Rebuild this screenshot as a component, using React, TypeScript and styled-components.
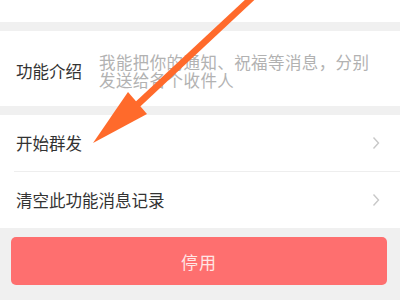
import styled, { createGlobalStyle } from "styled-components";

const GlobalStyle = createGlobalStyle`
  html, body {
    margin: 0;
    padding: 0;
    background: #f0f0f0;
  }
  body {
    font-family: "Noto Sans CJK SC", "Noto Sans", sans-serif;
  }
`;

const Page = styled.div`
  position: relative;
  width: 400px;
  height: 300px;
  overflow: hidden;
  background: #f0f0f0;
  display: flex;
  flex-direction: column;
  gap: 9px;
`;

const Section = styled.div<{ $height?: number }>`
  background: #ffffff;
  ${(p) => (p.$height ? `height: ${p.$height}px;` : "")}
`;

const IntroRow = styled.div`
  display: flex;
  align-items: center;
  height: 75px;
  padding: 5px 16px 0 16px;
  box-sizing: border-box;
`;

const Label = styled.div`
  width: 83px;
  flex: none;
  font-size: 16.5px;
  color: #333333;
`;

const Description = styled.div`
  flex: 1;
  font-size: 16.5px;
  line-height: 18px;
  color: #b2b2b2;
  letter-spacing: 0.4px;
`;

const NavRow = styled.div<{ $divider?: boolean }>`
  display: flex;
  align-items: center;
  justify-content: space-between;
  height: 56px;
  margin-left: 14px;
  padding: 0 20px 0 2px;
  ${(p) => (p.$divider ? "border-bottom: 1px solid #eeeeee;" : "")}
`;

const NavText = styled.span`
  font-size: 16.5px;
  color: #333333;
`;

const Chevron = styled.svg`
  width: 8px;
  height: 14px;
  flex: none;
`;

const ButtonArea = styled.div`
  padding: 0 13px 0 11px;
`;

const StopButton = styled.button`
  width: 100%;
  height: 48px;
  border: none;
  border-radius: 5px;
  background: #fe6f6f;
  color: #ffe6e6;
  font-family: "Noto Sans CJK SC", sans-serif;
  font-size: 17px;
  letter-spacing: 1px;
`;

const ArrowOverlay = styled.svg`
  position: absolute;
  left: 0;
  top: 0;
  pointer-events: none;
`;

const ChevronIcon = () => (
  <Chevron viewBox="0 0 8 14">
    <path d="M1.5 1.5 L6.5 7 L1.5 12.5" fill="none" stroke="#c8c8c8" strokeWidth="1.4" />
  </Chevron>
);

export default function App() {
  return (
    <>
      <GlobalStyle />
      <Page>
        <Section $height={22} />
        <Section>
          <IntroRow>
            <Label>功能介绍</Label>
            <Description>我能把你的通知、祝福等消息，分别发送给各个收件人</Description>
          </IntroRow>
        </Section>
        <Section>
          <NavRow $divider>
            <NavText>开始群发</NavText>
            <ChevronIcon />
          </NavRow>
          <NavRow>
            <NavText>清空此功能消息记录</NavText>
            <ChevronIcon />
          </NavRow>
        </Section>
        <ButtonArea>
          <StopButton>停用</StopButton>
        </ButtonArea>
        <ArrowOverlay width="400" height="300" viewBox="0 0 400 300">
          <line x1="256" y1="-6" x2="137" y2="105" stroke="#ff6a2b" strokeWidth="6.5" />
          <polygon points="93,143 128,92 147,114" fill="#ff6a2b" />
        </ArrowOverlay>
      </Page>
    </>
  );
}
